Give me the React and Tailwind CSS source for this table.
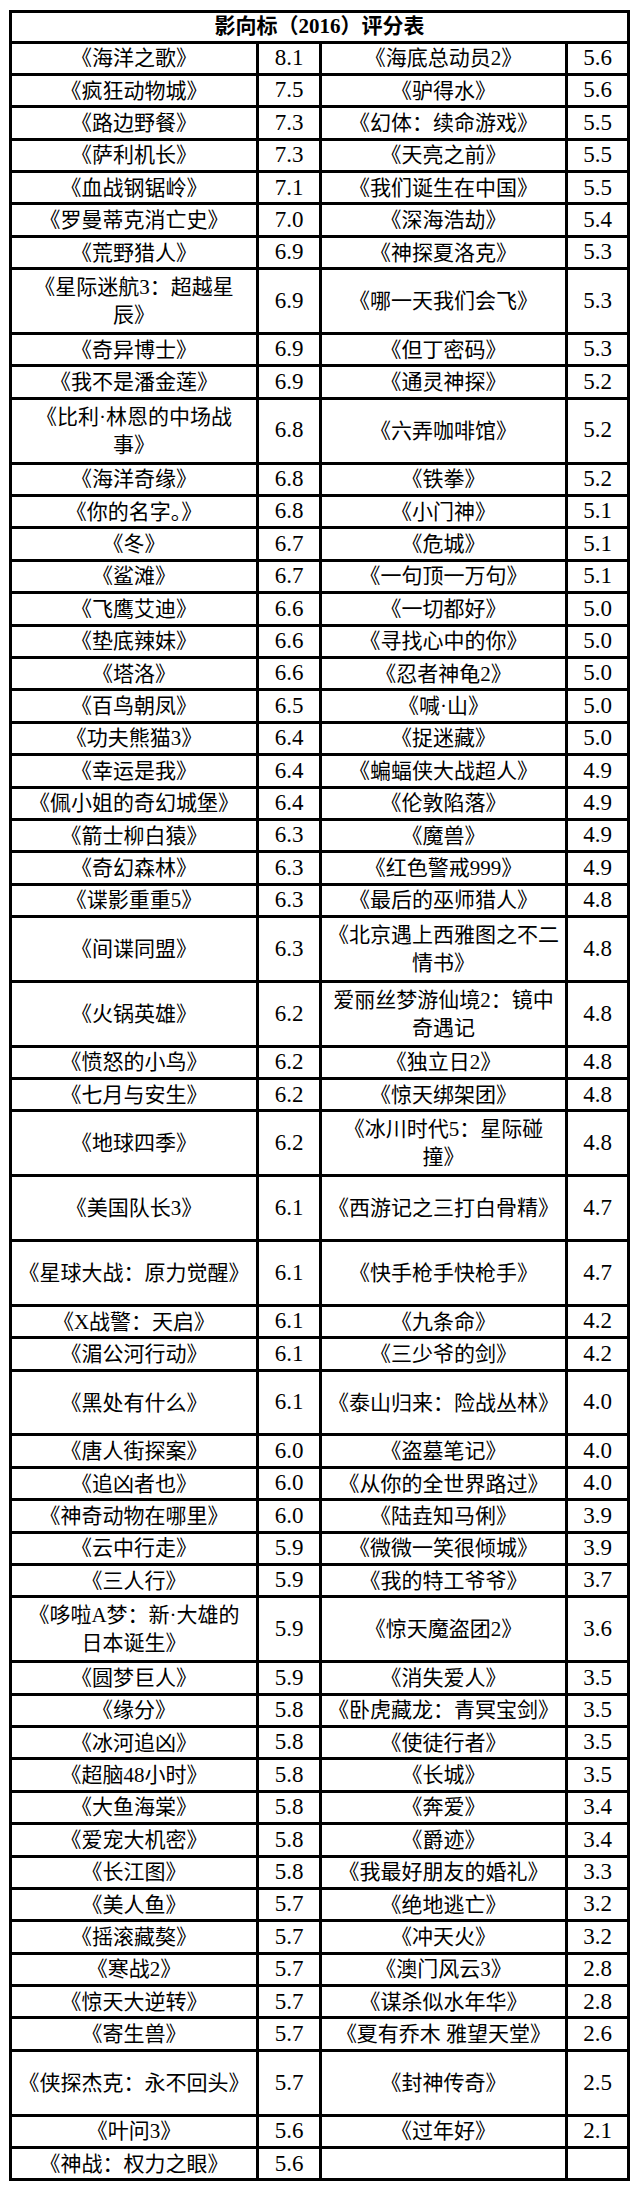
import React from 'react'

// [left title, score, right title, score, tall]
const rows = [
  ['《海洋之歌》', '8.1', '《海底总动员2》', '5.6'],
  ['《疯狂动物城》', '7.5', '《驴得水》', '5.6'],
  ['《路边野餐》', '7.3', '《幻体：续命游戏》', '5.5'],
  ['《萨利机长》', '7.3', '《天亮之前》', '5.5'],
  ['《血战钢锯岭》', '7.1', '《我们诞生在中国》', '5.5'],
  ['《罗曼蒂克消亡史》', '7.0', '《深海浩劫》', '5.4'],
  ['《荒野猎人》', '6.9', '《神探夏洛克》', '5.3'],
  ['《星际迷航3：超越星\n辰》', '6.9', '《哪一天我们会飞》', '5.3', true],
  ['《奇异博士》', '6.9', '《但丁密码》', '5.3'],
  ['《我不是潘金莲》', '6.9', '《通灵神探》', '5.2'],
  ['《比利·林恩的中场战\n事》', '6.8', '《六弄咖啡馆》', '5.2', true],
  ['《海洋奇缘》', '6.8', '《铁拳》', '5.2'],
  ['《你的名字。》', '6.8', '《小门神》', '5.1'],
  ['《冬》', '6.7', '《危城》', '5.1'],
  ['《鲨滩》', '6.7', '《一句顶一万句》', '5.1'],
  ['《飞鹰艾迪》', '6.6', '《一切都好》', '5.0'],
  ['《垫底辣妹》', '6.6', '《寻找心中的你》', '5.0'],
  ['《塔洛》', '6.6', '《忍者神龟2》', '5.0'],
  ['《百鸟朝凤》', '6.5', '《喊·山》', '5.0'],
  ['《功夫熊猫3》', '6.4', '《捉迷藏》', '5.0'],
  ['《幸运是我》', '6.4', '《蝙蝠侠大战超人》', '4.9'],
  ['《佩小姐的奇幻城堡》', '6.4', '《伦敦陷落》', '4.9'],
  ['《箭士柳白猿》', '6.3', '《魔兽》', '4.9'],
  ['《奇幻森林》', '6.3', '《红色警戒999》', '4.9'],
  ['《谍影重重5》', '6.3', '《最后的巫师猎人》', '4.8'],
  ['《间谍同盟》', '6.3', '《北京遇上西雅图之不二\n情书》', '4.8', true],
  ['《火锅英雄》', '6.2', '爱丽丝梦游仙境2：镜中\n奇遇记', '4.8', true],
  ['《愤怒的小鸟》', '6.2', '《独立日2》', '4.8'],
  ['《七月与安生》', '6.2', '《惊天绑架团》', '4.8'],
  ['《地球四季》', '6.2', '《冰川时代5：星际碰\n撞》', '4.8', true],
  ['《美国队长3》', '6.1', '《西游记之三打白骨精》', '4.7', true],
  ['《星球大战：原力觉醒》', '6.1', '《快手枪手快枪手》', '4.7', true],
  ['《X战警：天启》', '6.1', '《九条命》', '4.2'],
  ['《湄公河行动》', '6.1', '《三少爷的剑》', '4.2'],
  ['《黑处有什么》', '6.1', '《泰山归来：险战丛林》', '4.0', true],
  ['《唐人街探案》', '6.0', '《盗墓笔记》', '4.0'],
  ['《追凶者也》', '6.0', '《从你的全世界路过》', '4.0'],
  ['《神奇动物在哪里》', '6.0', '《陆垚知马俐》', '3.9'],
  ['《云中行走》', '5.9', '《微微一笑很倾城》', '3.9'],
  ['《三人行》', '5.9', '《我的特工爷爷》', '3.7'],
  ['《哆啦A梦：新·大雄的\n日本诞生》', '5.9', '《惊天魔盗团2》', '3.6', true],
  ['《圆梦巨人》', '5.9', '《消失爱人》', '3.5'],
  ['《缘分》', '5.8', '《卧虎藏龙：青冥宝剑》', '3.5'],
  ['《冰河追凶》', '5.8', '《使徒行者》', '3.5'],
  ['《超脑48小时》', '5.8', '《长城》', '3.5'],
  ['《大鱼海棠》', '5.8', '《奔爱》', '3.4'],
  ['《爱宠大机密》', '5.8', '《爵迹》', '3.4'],
  ['《长江图》', '5.8', '《我最好朋友的婚礼》', '3.3'],
  ['《美人鱼》', '5.7', '《绝地逃亡》', '3.2'],
  ['《摇滚藏獒》', '5.7', '《冲天火》', '3.2'],
  ['《寒战2》', '5.7', '《澳门风云3》', '2.8'],
  ['《惊天大逆转》', '5.7', '《谋杀似水年华》', '2.8'],
  ['《寄生兽》', '5.7', '《夏有乔木 雅望天堂》', '2.6'],
  ['《侠探杰克：永不回头》', '5.7', '《封神传奇》', '2.5', true],
  ['《叶问3》', '5.6', '《过年好》', '2.1'],
  ['《神战：权力之眼》', '5.6', '', ''],
]

function Row({ left, s1, right, s2, tall }) {
  return (
    <div className={`flex border-b-[3px] border-black ${tall ? 'h-[64.8px]' : 'h-[32.4px]'}`}>
      <div className="w-[247px] shrink-0 border-r-[3px] border-black flex items-center justify-center text-center whitespace-pre-line leading-[28px] text-[21px]">
        {left}
      </div>
      <div className="w-[63px] shrink-0 border-r-[3px] border-black flex items-center justify-center text-[23px]">
        {s1}
      </div>
      <div className="w-[246px] shrink-0 border-r-[3px] border-black flex items-center justify-center text-center whitespace-pre-line leading-[28px] text-[21px]">
        {right}
      </div>
      <div className="flex-1 flex items-center justify-center text-[23px]">
        {s2}
      </div>
    </div>
  )
}

export default function App() {
  return (
    <div className="w-[640px] min-h-[2190px] bg-white pt-[10px] text-black font-['Liberation_Serif','Noto_Sans_CJK_SC',serif]">
      <div className="ml-[9px] w-[621px] border-x-[3px] border-t-[3px] border-black">
        {/* 标题 */}
        <div className="h-[30.5px] border-b-[3px] border-black flex items-center justify-center text-[21px] font-bold">
          影向标（2016）评分表
        </div>
        {rows.map((r, i) => (
          <Row key={i} left={r[0]} s1={r[1]} right={r[2]} s2={r[3]} tall={r[4]} />
        ))}
      </div>
    </div>
  )
}
